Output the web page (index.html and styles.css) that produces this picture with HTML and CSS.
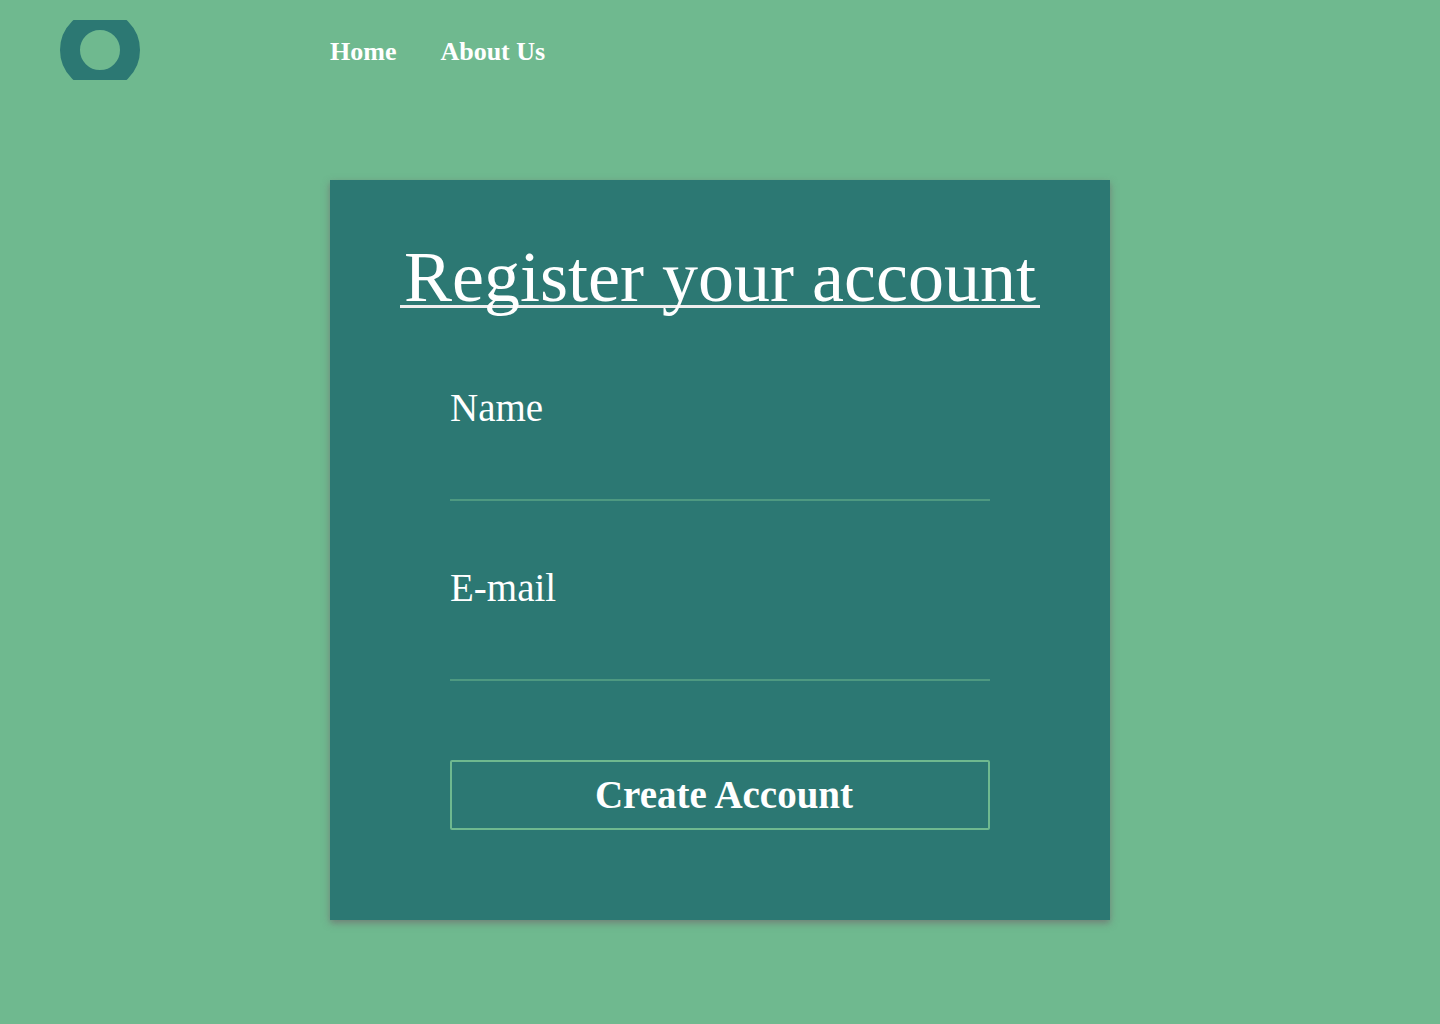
FILE: index.html
```html
<!DOCTYPE html>
<html lang="en">
<head>
  <meta charset="utf-8">
  <meta name="viewport" content="width=device-width, initial-scale=1">
  <title>Register your account</title>
  <link rel="stylesheet" href="styles.css">
</head>
<body>
  <header class="site-header">
    <a class="logo" href="#" aria-label="Home page">
      <svg class="logo-mark" viewBox="0 0 80 60" width="80" height="60" aria-hidden="true">
        <circle cx="40" cy="30" r="30" fill="none" stroke="currentColor" stroke-width="20"/>
      </svg>
    </a>
    <nav class="site-nav">
      <a class="nav-link" href="#">Home</a>
      <a class="nav-link" href="#">About Us</a>
    </nav>
  </header>
  <main class="page">
    <section class="card">
      <h1 class="card-title">Register your account</h1>
      <form class="form">
        <div class="field">
          <label class="field-label" for="name">Name</label>
          <input class="field-input" id="name" name="name" type="text" autocomplete="name">
        </div>
        <div class="field">
          <label class="field-label" for="email">E-mail</label>
          <input class="field-input" id="email" name="email" type="email" autocomplete="email">
        </div>
        <button class="submit" type="submit">Create Account</button>
      </form>
    </section>
  </main>
</body>
</html>
```

FILE: styles.css
```css
:root {
  --green: #6fb98f;
  --teal: #2c7873;
  --line: #4e9981;
}

* {
  box-sizing: border-box;
}

body {
  margin: 0;
  min-height: 100vh;
  background: var(--green);
  color: #fff;
  font-family: "Liberation Serif", serif;
}

.site-header {
  display: flex;
  align-items: center;
  gap: 190px;
  padding: 20px 60px;
}

.logo {
  color: var(--teal);
}

.logo-mark {
  display: block;
}

.site-nav {
  display: flex;
  gap: 44px;
  padding-top: 4px;
}

.nav-link {
  color: inherit;
  font-size: 26px;
  font-weight: 700;
  line-height: 30px;
  text-decoration: none;
}

.page {
  padding: 80px 20px;
}

.card {
  max-width: 780px;
  margin: 0 auto;
  padding: 69px 70px 90px;
  background: var(--teal);
  box-shadow: 0 3px 7px rgba(112, 112, 112, 0.8);
}

.card-title {
  margin: 0;
  border-bottom: 3px solid #eee;
  font-size: 72px;
  font-weight: 400;
  line-height: 56px;
  text-align: center;
}

.form {
  display: flex;
  flex-direction: column;
  padding: 80px 50px 0;
}

.field {
  display: flex;
  flex-direction: column;
}

.field + .field {
  margin-top: 67px;
}

.field-label {
  font-size: 39px;
  line-height: 40px;
}

.field-input {
  width: 100%;
  height: 73px;
  padding: 20px 0 8px;
  border: 0;
  border-bottom: 2px solid var(--line);
  border-radius: 0;
  background: transparent;
  color: inherit;
  font: inherit;
  font-size: 26px;
  outline: none;
}

.field-input:focus {
  border-bottom-color: #fff;
}

.submit {
  height: 70px;
  margin-top: 79px;
  padding: 0 0 0 8px;
  border: 2px solid var(--green);
  border-radius: 2px;
  background: transparent;
  color: inherit;
  font-family: inherit;
  font-size: 39px;
  font-weight: 700;
  line-height: 40px;
  cursor: pointer;
}
```
